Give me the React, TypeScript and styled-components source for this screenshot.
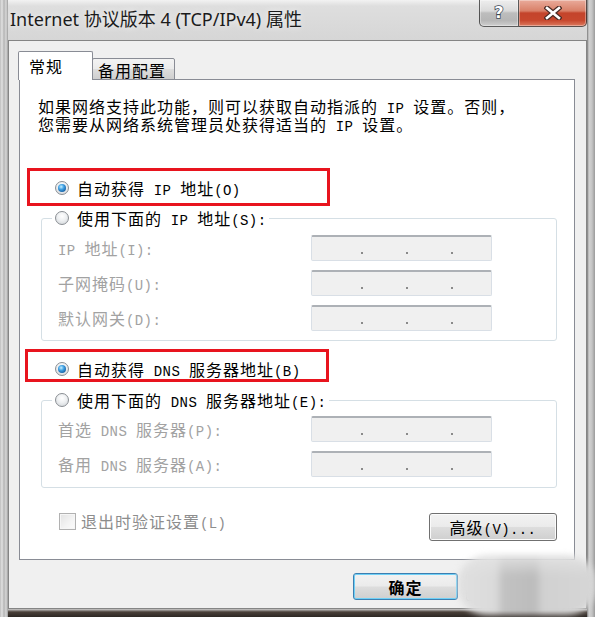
import React from "react";
import styled, { createGlobalStyle } from "styled-components";

const GlobalStyle = createGlobalStyle`
  html, body { margin: 0; padding: 0; background: #ffffff; }
  body { width: 595px; height: 617px; overflow: hidden; }
`;

const UI_FONT = `"Noto Sans CJK SC", "Liberation Mono", sans-serif`;

const Window = styled.div`
  position: relative;
  width: 595px;
  height: 617px;
  box-sizing: border-box;
  display: flex;
  flex-direction: column;
  overflow: hidden;
  font-family: ${UI_FONT};
  font-size: 16px;
  letter-spacing: 1px;
  color: #000;
  background:
    linear-gradient(90deg, #bdbdbd 0px, #e2e2e2 2px, #b4b4b4 4px, #d8d8d8 6px, #9c9c9c 8px) left top / 8px 100% no-repeat,
    linear-gradient(90deg, #7a7a7a 0px, #d2d2d2 2px, #c4c4c4 5px, #9a9a9a 8px) right top / 8px 100% no-repeat,
    linear-gradient(180deg, #f2f2f2 0px, #dedede 6px, #d6d6d6 40px, #cdcdcd 300px, #c2c2c2 560px, #a9a9a9 605px, #d0d0d0 609px, #4a4039 612px, #2d2824 617px);
`;

const Half = styled.span`
  font-family: "Liberation Mono", monospace;
  font-size: 14px;
  letter-spacing: 0.4px;
  line-height: 0;
`;

function T({ children }: { children: string }) {
  const parts = children.split(/([\u0000-\u00ff]+)/).filter(Boolean);
  return (
    <>
      {parts.map((p, i) =>
        /^[\u0000-\u00ff]+$/.test(p) ? <Half key={i}>{p}</Half> : <React.Fragment key={i}>{p}</React.Fragment>
      )}
    </>
  );
}

const TitleBar = styled.div`
  flex: none;
  height: 40px;
  display: flex;
  align-items: flex-start;
  padding: 0 8px 0 10px;
`;

const Title = styled.div`
  margin-top: 8px;
  font-family: "Noto Sans", "Noto Sans CJK SC", sans-serif;
  font-size: 18px;
  line-height: 22px;
  letter-spacing: 0;
  color: #1b1b1b;
  text-shadow: 0 0 6px rgba(255, 255, 255, 0.9);
  white-space: nowrap;
`;

const Caption = styled.div`
  margin-left: auto;
  display: flex;
`;

const CapButton = styled.div<{ $variant: "help" | "close" }>`
  width: ${(p) => (p.$variant === "close" ? 68 : 40)}px;
  height: 27px;
  box-sizing: border-box;
  border: 1px solid rgba(55, 55, 55, 0.8);
  border-top: none;
  ${(p) => (p.$variant === "close" ? "border-left: none;" : "")}
  border-radius: ${(p) => (p.$variant === "close" ? "0 0 5px 0" : "0 0 0 5px")};
  display: flex;
  align-items: center;
  justify-content: center;
  box-shadow: inset 0 0 0 1px rgba(255, 255, 255, 0.35);
  background: ${(p) =>
    p.$variant === "close"
      ? "linear-gradient(180deg, #e9ab9b 0%, #d98068 42%, #c4442b 50%, #c7472d 78%, #dc7a5f 100%)"
      : "linear-gradient(180deg, #eeeeee 0%, #dadada 42%, #bdbdbd 50%, #b6b6b6 78%, #cfcfcf 100%)"};
`;

const HelpGlyph = styled.span`
  font-family: "DejaVu Sans", sans-serif;
  font-weight: bold;
  font-size: 16px;
  line-height: 16px;
  letter-spacing: 0;
  color: #ffffff;
  -webkit-text-stroke: 1.5px #3b4756;
  paint-order: stroke fill;
  margin-top: -1px;
`;

const Client = styled.div`
  flex: 1;
  margin: 0 8px 8px 8px;
  background: #f0f0f0;
  border: 1px solid #858585;
  display: flex;
  flex-direction: column;
  padding: 10px 11px 0 9px;
`;

const TabStrip = styled.div`
  display: flex;
  align-items: flex-end;
  height: 29px;
  position: relative;
  z-index: 1;
`;

const Tab = styled.div<{ $active?: boolean }>`
  box-sizing: border-box;
  font-size: 16px;
  line-height: 20px;
  letter-spacing: 1px;
  border: 1px solid #898c95;
  border-radius: 2px 2px 0 0;
  ${(p) =>
    p.$active
      ? `
    width: 75px;
    height: 29px;
    border-bottom: none;
    background: #ffffff;
    padding: 4px 0 0 10px;
    z-index: 2;
  `
      : `
    width: 83px;
    height: 22px;
    margin-left: -1px;
    background: linear-gradient(180deg, #f3f3f3 0%, #ebebeb 50%, #dddddd 51%, #cfcfcf 100%);
    padding: 1px 0 0 5px;
  `}
`;

const Panel = styled.div`
  margin: -1px 0 0 1px;
  background: #ffffff;
  border: 1px solid #898c95;
  display: flex;
  flex-direction: column;
  align-items: flex-start;
  padding: 17px 17px 18px 0;
`;

const Description = styled.p`
  margin: 0 0 0 18px;
  line-height: 18px;
  white-space: nowrap;
`;

const Highlight = styled.div<{ $left: number; $width: number; $height: number; $padLeft: number; $top: number }>`
  box-sizing: border-box;
  margin: ${(p) => p.$top}px 0 0 ${(p) => p.$left}px;
  width: ${(p) => p.$width}px;
  height: ${(p) => p.$height}px;
  border: 3px solid #e8141e;
  padding: 8px 0 0 ${(p) => p.$padLeft}px;
  display: flex;
  align-items: flex-start;
`;

const Option = styled.span`
  display: flex;
  align-items: center;
  gap: 8px;
  height: 18px;
  line-height: 18px;
  white-space: nowrap;
`;

const Radio = styled.span<{ $checked?: boolean }>`
  flex: none;
  width: 14px;
  height: 14px;
  box-sizing: border-box;
  border-radius: 50%;
  border: 1px solid #8a8e93;
  background: radial-gradient(circle at 50% 35%, #ffffff 0%, #eef0f2 45%, #cdd1d5 100%);
  display: flex;
  align-items: center;
  justify-content: center;
  &::after {
    content: "";
    display: ${(p) => (p.$checked ? "block" : "none")};
    width: 8px;
    height: 8px;
    border-radius: 50%;
    background: radial-gradient(circle at 40% 35%, #c6f0ff 0%, #3f9fe2 38%, #0b4c8e 90%);
  }
`;

const Group = styled.fieldset<{ $top: number; $padTop: number; $padBottom: number }>`
  margin: ${(p) => p.$top}px 0 0 21px;
  width: 516px;
  box-sizing: border-box;
  min-inline-size: 0;
  border: 1px solid #d5dfe5;
  border-radius: 3px;
  padding: ${(p) => p.$padTop}px 0 ${(p) => p.$padBottom}px 0;
`;

const Legend = styled.legend`
  margin-left: 10px;
  padding: 0 3px;
  height: 18px;
  line-height: 18px;
`;

const FieldGrid = styled.div`
  display: grid;
  grid-template-columns: 253px 181px;
  row-gap: 9px;
  align-items: center;
  padding-left: 16px;
`;

const FieldLabel = styled.span`
  color: #a2a2a2;
  line-height: 18px;
  white-space: nowrap;
`;

const IpField = styled.div`
  width: 181px;
  height: 26px;
  box-sizing: border-box;
  background: #f0f0f0;
  border: 1px solid #d9dfe6;
  border-top: 2px solid #adb1b6;
  border-radius: 2px;
  display: flex;
  align-items: flex-end;
  padding: 0 0 6px 49px;
  gap: 43px;
`;

const Dot = styled.span`
  width: 2px;
  height: 2px;
  background: #8a8a8a;
`;

const BottomRow = styled.div`
  margin-top: 24px;
  align-self: stretch;
  display: flex;
  align-items: flex-start;
  padding-left: 39px;
`;

const CheckOption = styled.span`
  display: flex;
  align-items: center;
  gap: 5px;
  height: 18px;
  line-height: 18px;
  color: #8d8d8d;
  white-space: nowrap;
`;

const CheckBox = styled.span`
  width: 17px;
  height: 17px;
  box-sizing: border-box;
  border: 1px solid #b1b1b1;
  background: linear-gradient(135deg, #e2e2e2 0%, #f4f4f4 60%, #fbfbfb 100%);
  box-shadow: inset 0 0 0 1px #f6f6f6;
`;

const PushButton = styled.button<{ $width: number; $default?: boolean }>`
  width: ${(p) => p.$width}px;
  height: ${(p) => (p.$default ? 27 : 28)}px;
  box-sizing: border-box;
  margin: ${(p) => (p.$default ? "0" : "1px 0 0 auto")};
  padding: 0;
  font-family: ${UI_FONT};
  font-size: 16px;
  letter-spacing: 1px;
  line-height: 18px;
  color: #000;
  border-radius: 3px;
  border: 1px solid ${(p) => (p.$default ? "#3c7fb1" : "#707070")};
  box-shadow: inset 0 0 0 1px ${(p) => (p.$default ? "#6fd0f6" : "#fbfbfb")};
  background: linear-gradient(180deg, #f2f2f2 0%, #ebebeb 48%, #dddddd 52%, #cfcfcf 100%);
  ${(p) => (p.$default ? "font-weight: 600;" : "")}
`;

const ButtonRow = styled.div`
  margin-top: 13px;
  display: flex;
  justify-content: flex-end;
  gap: 8px;
  padding-right: 4px;
`;

const Smudge = styled.div`
  position: absolute;
  left: 458px;
  top: 555px;
  width: 138px;
  height: 60px;
  border-radius: 30px / 26px;
  filter: blur(3px);
  background:
    linear-gradient(180deg, rgba(228, 228, 228, 0.9) 0%, rgba(228, 228, 228, 0) 35%),
    linear-gradient(90deg, #e0e0e0 0%, #dadada 28%, #c2c2c2 32%, #bcbcbc 56%, #d1d1d1 61%, #d6d6d6 100%);
`;

function IpInput() {
  return (
    <IpField>
      <Dot />
      <Dot />
      <Dot />
    </IpField>
  );
}

export default function App() {
  return (
    <>
      <GlobalStyle />
      <Window>
        <TitleBar>
          <Title>Internet 协议版本 4 (TCP/IPv4) 属性</Title>
          <Caption>
            <CapButton $variant="help">
              <HelpGlyph>?</HelpGlyph>
            </CapButton>
            <CapButton $variant="close">
              <svg width="18" height="14" viewBox="0 0 18 14">
                <path d="M3 2 L15 12 M15 2 L3 12" stroke="#4a2a24" strokeWidth="5" strokeLinecap="square" fill="none" />
                <path d="M3 2 L15 12 M15 2 L3 12" stroke="#ffffff" strokeWidth="2.6" strokeLinecap="square" fill="none" />
              </svg>
            </CapButton>
          </Caption>
        </TitleBar>
        <Client>
          <TabStrip>
            <Tab $active>常规</Tab>
            <Tab>备用配置</Tab>
          </TabStrip>
          <Panel>
            <Description>
              <T>如果网络支持此功能，则可以获取自动指派的 IP 设置。否则，</T>
              <br />
              <T>您需要从网络系统管理员处获得适当的 IP 设置。</T>
            </Description>
            <Highlight $top={35} $left={7} $width={303} $height={38} $padLeft={25}>
              <Option>
                <Radio $checked />
                <span>
                  <T>自动获得 IP 地址(O)</T>
                </span>
              </Option>
            </Highlight>
            <Group $top={3} $padTop={8} $padBottom={9}>
              <Legend>
                <Option>
                  <Radio />
                  <span>
                    <T>使用下面的 IP 地址(S):</T>
                  </span>
                </Option>
              </Legend>
              <FieldGrid>
                <FieldLabel>
                  <T>IP 地址(I):</T>
                </FieldLabel>
                <IpInput />
                <FieldLabel>
                  <T>子网掩码(U):</T>
                </FieldLabel>
                <IpInput />
                <FieldLabel>
                  <T>默认网关(D):</T>
                </FieldLabel>
                <IpInput />
              </FieldGrid>
            </Group>
            <Highlight $top={8} $left={5} $width={304} $height={33} $padLeft={27}>
              <Option>
                <Radio $checked />
                <span>
                  <T>自动获得 DNS 服务器地址(B)</T>
                </span>
              </Option>
            </Highlight>
            <Group $top={9} $padTop={7} $padBottom={10}>
              <Legend>
                <Option>
                  <Radio />
                  <span>
                    <T>使用下面的 DNS 服务器地址(E):</T>
                  </span>
                </Option>
              </Legend>
              <FieldGrid>
                <FieldLabel>
                  <T>首选 DNS 服务器(P):</T>
                </FieldLabel>
                <IpInput />
                <FieldLabel>
                  <T>备用 DNS 服务器(A):</T>
                </FieldLabel>
                <IpInput />
              </FieldGrid>
            </Group>
            <BottomRow>
              <CheckOption>
                <CheckBox />
                <span>
                  <T>退出时验证设置(L)</T>
                </span>
              </CheckOption>
              <PushButton $width={128}>
                <T>高级(V)...</T>
              </PushButton>
            </BottomRow>
          </Panel>
          <ButtonRow>
            <PushButton $width={105} $default>
              确定
            </PushButton>
            <PushButton $width={105} $default={false} style={{ margin: 0 }}>
              取消
            </PushButton>
          </ButtonRow>
        </Client>
        <Smudge />
      </Window>
    </>
  );
}
